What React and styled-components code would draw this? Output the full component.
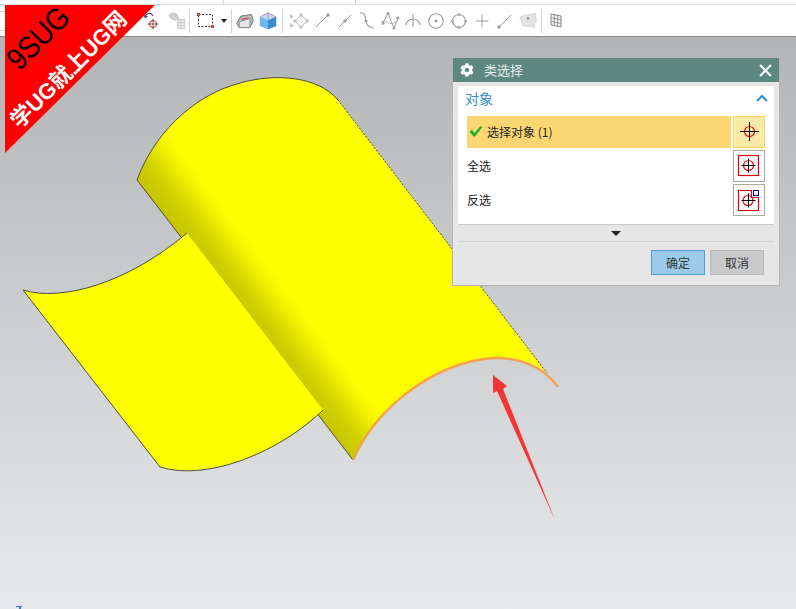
import React from "react";
import styled, { createGlobalStyle } from "styled-components";
import { FaCog } from "react-icons/fa";

const GlobalStyle = createGlobalStyle`
  html, body {
    margin: 0;
    padding: 0;
    height: 100%;
    overflow: hidden;
    background: #ffffff;
    font-family: "Noto Sans CJK SC", "Liberation Sans", sans-serif;
  }
`;

const GREY = "#9a9c9c";

const toolIcons = [
  { width: 24, node: <RotateSnapIcon /> },
  { width: 24, node: <RobotArmIcon /> },
  { sep: true, r: 0 },
  { width: 41, node: <SelectBoxIcon /> },
  { sep: true, r: 0 },
  { width: 26, node: <WireCubeIcon /> },
  { width: 20, node: <BlueCubeIcon /> },
  { sep: true, l: 4, r: 4 },
  { width: 23, node: <PointsIcon /> },
  { width: 23, node: <LineDotIcon cx={17} cy={5} /> },
  { width: 23, node: <LineDotIcon cx={11} cy={11} /> },
  { width: 22, node: <CurveIcon /> },
  { width: 23, node: <SplineIcon /> },
  { width: 23, node: <UmbrellaIcon /> },
  { width: 23, node: <CircleDotIcon /> },
  { width: 23, node: <CircleRingIcon /> },
  { width: 23, node: <CrossIcon /> },
  { width: 23, node: <LineDotIcon cx={5} cy={17} /> },
  { width: 23, node: <SheetIcon /> },
  { sep: true, l: 2, r: 4 },
  { width: 20, node: <GridIcon /> },
];

export default function App() {
  return (
    <Page>
      <GlobalStyle />
      <TopStrip>
        <StripTick $x={223} />
        <StripTick $x={355} />
      </TopStrip>
      <Toolbar>
        <EdgeBox />
        {toolIcons.map((item, i) =>
          item.sep ? (
            <Separator key={i} $l={item.l || 0} $r={item.r || 0} />
          ) : (
            <ToolSlot key={i} $w={item.width}>{item.node}</ToolSlot>
          )
        )}
      </Toolbar>
      <Viewport>
        <Model />
        <AxisMark />
        <SelectDialog />
      </Viewport>
      <Banner>
        <BannerBrand>9SUG</BannerBrand>
        <BannerSlogan>学UG就上UG网</BannerSlogan>
      </Banner>
    </Page>
  );
}

function Model() {
  return (
    <ModelCanvas viewBox="0 37 796 572">
      <defs>
        <linearGradient id="shade" gradientUnits="userSpaceOnUse" x1="245" y1="320" x2="287" y2="288">
          <stop offset="0" stopColor="#c6c600" />
          <stop offset="0.3" stopColor="#cece00" />
          <stop offset="0.55" stopColor="#e0e000" />
          <stop offset="0.8" stopColor="#f6f600" />
          <stop offset="1" stopColor="#ffff00" />
        </linearGradient>
      </defs>
      <path
        d="M137 180 C152 138 190 96 240 83 C275 73 318 76 338 100 L547 373 C527 356 497 355 473 361 C425 372 375 410 353 460 Z"
        fill="url(#shade)"
      />
      <path d="M137 180 C152 138 190 96 240 83 C275 73 318 76 338 100" fill="none" stroke="#4d4d40" strokeWidth="1" />
      <path d="M137 180 L353 460" fill="none" stroke="#4d4d40" strokeWidth="1" />
      <path d="M338 100 L547 373" fill="none" stroke="#4d4d40" strokeWidth="1" strokeDasharray="2 1.5" />
      <path
        d="M23 290 C62 302 128 283 187 233 L323 410 C282 450 210 482 160 467 Z"
        fill="#ffff00"
      />
      <path
        d="M160 467 L23 290 C62 302 128 283 187 233 M323 410 C282 450 210 482 160 467"
        fill="none"
        stroke="#4d4d40"
        strokeWidth="1"
      />
      <path
        d="M353 460 C375 410 425 372 473 361 C497 355 535 356 558 387"
        fill="none"
        stroke="#f7a24a"
        strokeWidth="2.4"
      />
      <path d="M493 375 L507 386 L503 389 L555 520 L497 391 L493 393 Z" fill="#f43535" />
    </ModelCanvas>
  );
}

function SelectDialog() {
  return (
    <Dialog>
      <DialogHeader>
        <FaCog size={14} />
        <DialogTitle>类选择</DialogTitle>
        <CloseIcon />
      </DialogHeader>
      <DialogPanel>
        <GroupHeader>
          <span>对象</span>
          <ChevronUp />
        </GroupHeader>
        <SelectRow>
          <RowLabel $active>
            <CheckIcon />
            选择对象 (1)
          </RowLabel>
          <SquareButton $active>
            <TargetIcon />
          </SquareButton>
        </SelectRow>
        <SelectRow>
          <RowLabel>全选</RowLabel>
          <SquareButton>
            <FramedTargetIcon />
          </SquareButton>
        </SelectRow>
        <SelectRow>
          <RowLabel>反选</RowLabel>
          <SquareButton>
            <InvertTargetIcon />
          </SquareButton>
        </SelectRow>
      </DialogPanel>
      <ExpandRow>
        <ExpandArrow />
      </ExpandRow>
      <DialogFooter>
        <FooterButton $primary>确定</FooterButton>
        <FooterButton>取消</FooterButton>
      </DialogFooter>
    </Dialog>
  );
}

function TargetIcon() {
  return (
    <svg width="26" height="26" viewBox="0 0 26 26">
      <circle cx="13.5" cy="12.5" r="5" fill="none" stroke="#e81010" strokeWidth="1.2" />
      <path d="M13.5 3V22M4 12.5H23" stroke="#000" strokeWidth="1" />
    </svg>
  );
}

function FramedTargetIcon() {
  return (
    <svg width="26" height="26" viewBox="0 0 26 26">
      <rect x="2.5" y="2.5" width="20" height="20" fill="#fff" stroke="#e00000" strokeWidth="1.2" />
      <circle cx="12.5" cy="12.5" r="5" fill="none" stroke="#e81010" strokeWidth="1.2" />
      <path d="M12.5 5.5V19.5M5.5 12.5H19.5" stroke="#000" strokeWidth="1" />
    </svg>
  );
}

function InvertTargetIcon() {
  return (
    <svg width="26" height="26" viewBox="0 0 26 26">
      <path d="M2.5 3.5H15.5V10.5H22.5V23.5H2.5Z" fill="#fff" stroke="#e00000" strokeWidth="1.2" />
      <rect x="17.5" y="3.5" width="5" height="5" fill="#fff" stroke="#0000c8" strokeWidth="1" />
      <circle cx="12" cy="13.5" r="5" fill="none" stroke="#e81010" strokeWidth="1.2" />
      <path d="M12.5 6.5V20.5M5.5 13.5H19.5" stroke="#000" strokeWidth="1" />
    </svg>
  );
}

function CheckIcon() {
  return (
    <svg width="14" height="12" viewBox="0 0 14 12">
      <path d="M0.5 6.5L3 5L5.5 8L11.5 1L13.5 2L6 11.5H4.5Z" fill="#1fb32a" />
    </svg>
  );
}

function ChevronUp() {
  return (
    <svg width="12" height="8" viewBox="0 0 12 8">
      <path d="M1 7L6 2L11 7" fill="none" stroke="#2d8fc4" strokeWidth="2" />
    </svg>
  );
}

function CloseIcon() {
  return (
    <CloseSvg viewBox="0 0 12 12">
      <path d="M1 1L11 11M11 1L1 11" stroke="#fff" strokeWidth="2" />
    </CloseSvg>
  );
}

function AxisMark() {
  return (
    <AxisSvg viewBox="0 0 6 3">
      <path d="M0 0H6V1H5V3H3V1H0Z" fill="#3d6cf5" />
    </AxisSvg>
  );
}

function ToolIcon({ size = 22, children }) {
  return (
    <svg width={size} height={size} viewBox="0 0 22 22">
      {children}
    </svg>
  );
}

function RotateSnapIcon() {
  return (
    <ToolIcon>
      <path d="M3 7C4 3 9 2 11 6" fill="none" stroke="#3c4a80" strokeWidth="1.2" />
      <path d="M1.5 5L3 8.5L6 6.5Z" fill="#3c4a80" />
      <circle cx="11" cy="14" r="3.5" fill="none" stroke="#d02020" strokeWidth="1" />
      <path d="M11 8.5V19.5M5.5 14H16.5" stroke="#444" strokeWidth="0.8" />
    </ToolIcon>
  );
}

function RobotArmIcon() {
  return (
    <ToolIcon size={18}>
      <path d="M1 4L6 1L11 3L13 8L9 10L4 8Z" fill="#cfd1d1" stroke="#b4b6b6" />
      <rect x="12" y="9" width="8" height="11" fill="#eceeee" stroke="#bcbebe" />
      <path d="M12 13H20M12 16.5H20M16 9V20" stroke="#bcbebe" strokeWidth="0.8" />
    </ToolIcon>
  );
}

function SelectBoxIcon() {
  return (
    <SelectWrap>
      <ToolIcon>
        <rect x="4.5" y="4.5" width="14" height="12" fill="none" stroke="#333" strokeWidth="1" strokeDasharray="2 1.5" />
        <rect x="3" y="3" width="3" height="3" fill="#d9483b" />
        <rect x="17" y="15" width="3" height="3" fill="#d9483b" />
      </ToolIcon>
      <DropCaret />
    </SelectWrap>
  );
}

function WireCubeIcon() {
  return (
    <ToolIcon size={18}>
      <path d="M1 14L6 5L19 3L21 11L17 19L4 19Z" fill="#bcbec2" stroke="#66686c" strokeWidth="1.1" />
      <path d="M4 12L17 8L17 19L4 19Z" fill="#e6e8ec" stroke="#77797d" strokeWidth="0.9" />
      <path d="M7 9L15 7" stroke="#d84040" strokeWidth="1.4" />
    </ToolIcon>
  );
}

function BlueCubeIcon() {
  return (
    <ToolIcon size={18}>
      <path d="M1 6L11 1L21 6V17L11 21L1 17Z" fill="#6fb6ea" />
      <path d="M1 6L11 10L21 6L11 1Z" fill="#b8dcf4" />
      <path d="M11 10L21 6V17L11 21Z" fill="#3c87d2" />
      <path d="M1 6L11 1L21 6M11 1V10" fill="none" stroke="#e0708a" strokeWidth="0.9" />
    </ToolIcon>
  );
}

function PointsIcon() {
  return (
    <ToolIcon>
      <path d="M2 4V9L6 6.5ZM2 13V18L6 15.5Z" fill="#c4c6c6" />
      <path d="M7 11L13 5L19 11L13 17Z" fill="none" stroke="#bcbebe" strokeWidth="1" />
      <circle cx="13" cy="5" r="1.7" fill="#bcbebe" />
      <circle cx="13" cy="17" r="1.7" fill="#bcbebe" />
      <circle cx="7" cy="11" r="1.7" fill="#bcbebe" />
      <circle cx="19" cy="11" r="1.7" fill="#bcbebe" />
    </ToolIcon>
  );
}

function LineDotIcon({ cx, cy }) {
  return (
    <ToolIcon>
      <path d="M5 17L17 5" stroke={GREY} strokeWidth="1" />
      <circle cx={cx} cy={cy} r="1.7" fill={GREY} />
    </ToolIcon>
  );
}

function CurveIcon() {
  return (
    <ToolIcon>
      <path d="M4 3H6C11 3 8 11 11 14C13 18 16 18 18 18" fill="none" stroke={GREY} strokeWidth="1.2" />
      <circle cx="10" cy="11" r="1.5" fill={GREY} />
    </ToolIcon>
  );
}

function SplineIcon() {
  return (
    <ToolIcon>
      <path d="M3 15L9 3L13 14L15 18L19 8" fill="none" stroke={GREY} strokeWidth="1" />
      <path d="M3 12C6 7 10 19 19 10" fill="none" stroke="#b4b6b6" strokeWidth="1" />
      <circle cx="9" cy="3.5" r="1.5" fill={GREY} />
      <circle cx="4" cy="13" r="1.5" fill={GREY} />
      <circle cx="15" cy="18" r="1.5" fill={GREY} />
      <circle cx="19" cy="8" r="1.5" fill={GREY} />
    </ToolIcon>
  );
}

function UmbrellaIcon() {
  return (
    <ToolIcon>
      <path d="M3.5 15C5 11 8 9 11 9C14 9 17 11 18.5 15M11 4V17" fill="none" stroke={GREY} strokeWidth="1.1" />
    </ToolIcon>
  );
}

function CircleDotIcon() {
  return (
    <ToolIcon>
      <circle cx="11" cy="11" r="7.3" fill="none" stroke={GREY} strokeWidth="1.1" />
      <circle cx="11" cy="11" r="1.4" fill={GREY} />
    </ToolIcon>
  );
}

function CircleRingIcon() {
  return (
    <ToolIcon>
      <circle cx="11" cy="11" r="6.5" fill="none" stroke={GREY} strokeWidth="1.1" />
      <circle cx="11" cy="4.5" r="1.6" fill="#acaeae" />
      <circle cx="11" cy="17.5" r="1.6" fill="#acaeae" />
      <circle cx="4.5" cy="11" r="1.6" fill="#acaeae" />
      <circle cx="17.5" cy="11" r="1.6" fill="#acaeae" />
    </ToolIcon>
  );
}

function CrossIcon() {
  return (
    <ToolIcon>
      <path d="M11 4.5V17.5M4.5 11H17.5" stroke={GREY} strokeWidth="1" />
    </ToolIcon>
  );
}

function SheetIcon() {
  return (
    <ToolIcon size={18}>
      <path d="M1 7C6 2 13 5 20 1L21 11C18 13 20 17 19 20C14 16 9 19 4 16C5 12 2 10 1 7Z" fill="#e2e4e4" stroke="#cfd1d1" />
      <circle cx="11" cy="8" r="1.6" fill="#8f9191" />
    </ToolIcon>
  );
}

function GridIcon() {
  return (
    <svg width="12" height="15" viewBox="0 0 12 15">
      <path d="M1 1L11 3V14L1 12Z" fill="#eef0f0" stroke="#868888" />
      <path d="M4.3 1.7V12.7M7.6 2.3V13.3M1 4.7L11 6.7M1 8.4L11 10.4" stroke="#868888" strokeWidth="0.8" />
    </svg>
  );
}

const Page = styled.div`
  position: relative;
  width: 796px;
  height: 609px;
  display: flex;
  flex-direction: column;
  overflow: hidden;
`;

const TopStrip = styled.div`
  height: 4px;
  flex: none;
  background: #fff;
  border-bottom: 1px solid #dcdcdc;
  position: relative;
`;

const StripTick = styled.i`
  position: absolute;
  left: ${(p) => p.$x}px;
  top: 0;
  width: 1px;
  height: 4px;
  background: #d8d8d8;
`;

const Toolbar = styled.div`
  position: relative;
  height: 31px;
  flex: none;
  display: flex;
  align-items: center;
  padding-left: 141px;
  background: #fff;
  border-bottom: 1px solid #8c8d8e;
`;

const EdgeBox = styled.i`
  position: absolute;
  left: 0;
  top: 6px;
  width: 5px;
  height: 18px;
  border-top: 1px solid #d8d8d8;
  border-bottom: 1px solid #d8d8d8;
`;

const ToolSlot = styled.div`
  width: ${(p) => p.$w}px;
  flex: none;
  display: flex;
  justify-content: center;
  align-items: center;
`;

const Separator = styled.div`
  width: 1px;
  height: 24px;
  flex: none;
  margin: 0 ${(p) => p.$r}px 0 ${(p) => p.$l}px;
  background: #d4d4d4;
`;

const SelectWrap = styled.div`
  display: flex;
  align-items: center;
  gap: 5px;
`;

const DropCaret = styled.i`
  width: 0;
  height: 0;
  border-left: 3px solid transparent;
  border-right: 3px solid transparent;
  border-top: 4px solid #222;
`;

const Viewport = styled.div`
  position: relative;
  flex: 1;
  background: linear-gradient(#b3b4b5, #e8e9ea);
`;

const ModelCanvas = styled.svg`
  position: absolute;
  inset: 0;
  width: 100%;
  height: 100%;
`;

const AxisSvg = styled.svg`
  position: absolute;
  left: 16px;
  bottom: 0;
  width: 6px;
  height: 3px;
`;

const Banner = styled.div`
  position: absolute;
  left: 5px;
  top: 5px;
  width: 150px;
  height: 148px;
  background: #ff0000;
  clip-path: polygon(0 0, 100% 0, 0 100%);
`;

const BannerBrand = styled.div`
  position: absolute;
  left: 33px;
  top: 33px;
  transform: translate(-50%, -50%) rotate(-45deg) scaleX(0.88);
  font-family: "Liberation Sans", sans-serif;
  font-size: 31px;
  line-height: 1;
  color: #000;
  white-space: nowrap;
`;

const BannerSlogan = styled.div`
  position: absolute;
  left: 64px;
  top: 65px;
  transform: translate(-50%, -50%) rotate(-45deg);
  font-family: "Liberation Sans", "Noto Sans CJK SC", sans-serif;
  font-size: 22px;
  font-weight: 700;
  line-height: 1;
  color: #fff;
  white-space: nowrap;
`;

const Dialog = styled.div`
  position: absolute;
  left: 452px;
  top: 21px;
  width: 328px;
  height: 228px;
  box-sizing: border-box;
  background: #e6e6e6;
  border: 1px solid #b4b4b4;
  border-top: 0;
  display: flex;
  flex-direction: column;
`;

const DialogHeader = styled.div`
  height: 24px;
  flex: none;
  background: #5c8880;
  color: #fff;
  display: flex;
  align-items: center;
  padding: 0 7px;
`;

const DialogTitle = styled.span`
  flex: 1;
  margin-left: 10px;
  padding-bottom: 2px;
  font-size: 13px;
  color: #e8f0ee;
`;

const CloseSvg = styled.svg`
  width: 13px;
  height: 13px;
`;

const DialogPanel = styled.div`
  margin: 4px 5px 0;
  height: 138px;
  background: #fff;
  border-bottom: 1px solid #c8c8c8;
  display: flex;
  flex-direction: column;
`;

const GroupHeader = styled.div`
  height: 28px;
  box-sizing: border-box;
  display: flex;
  align-items: center;
  justify-content: space-between;
  padding: 0 6px 4px 7px;
  font-size: 14px;
  color: #3a8fc4;
`;

const SelectRow = styled.div`
  height: 32px;
  margin: 2px 9px 0;
  display: flex;
  gap: 2px;
`;

const RowLabel = styled.div`
  flex: 1;
  display: flex;
  align-items: center;
  gap: 4px;
  box-sizing: border-box;
  padding: 0 0 2px ${(p) => (p.$active ? "2px" : "0")};
  font-size: 12px;
  color: #222;
  background: ${(p) => (p.$active ? "#fcd672" : "transparent")};
`;

const SquareButton = styled.div`
  width: 32px;
  height: 32px;
  box-sizing: border-box;
  display: flex;
  align-items: center;
  justify-content: center;
  background: ${(p) => (p.$active ? "#faeaa8" : "#fff")};
  border: 1px solid ${(p) => (p.$active ? "#fcd672" : "#a8a8a8")};
`;

const ExpandRow = styled.div`
  height: 16px;
  margin: 0 5px;
  display: flex;
  align-items: center;
  justify-content: center;
  border-bottom: 1px solid #d2d2d2;
`;

const ExpandArrow = styled.i`
  width: 0;
  height: 0;
  border-left: 5px solid transparent;
  border-right: 5px solid transparent;
  border-top: 5px solid #222;
`;

const DialogFooter = styled.div`
  flex: 1;
  display: flex;
  justify-content: flex-end;
  gap: 5px;
  padding: 8px 15px 0 0;
`;

const FooterButton = styled.div`
  width: 54px;
  height: 25px;
  box-sizing: border-box;
  display: flex;
  align-items: center;
  justify-content: center;
  font-size: 12px;
  color: #333;
  background: ${(p) => (p.$primary ? "#9bcbe8" : "#c8c9cb")};
  border: 1px solid ${(p) => (p.$primary ? "#4f9fd0" : "#b8b8b8")};
`;
